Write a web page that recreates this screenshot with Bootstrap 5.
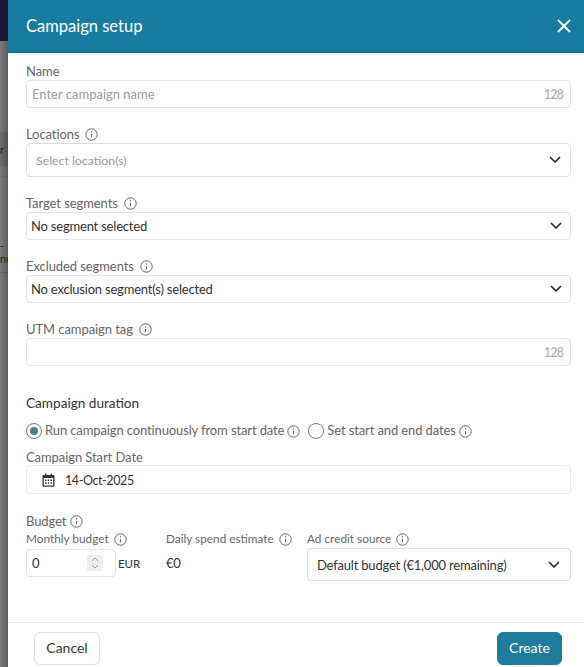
<!DOCTYPE html>
<html lang="en">
<head>
<meta charset="utf-8">
<title>Campaign setup</title>
<link rel="stylesheet" href="https://cdn.jsdelivr.net/npm/bootstrap@5.3.0/dist/css/bootstrap.min.css">
<style>
html,body{height:667px;overflow:hidden;background:#fff}
body{font-family:"Lato","Noto Sans",sans-serif;font-size:13px;color:#333}
.shell{height:667px}
.backdrop{width:8px;flex:none;background:linear-gradient(to right,#7c7c7c,#5c5c5c);overflow:hidden;color:#222;font-size:11px;line-height:13px;white-space:nowrap}
.bd-top{height:41px;background:#1e1338}
.bd-row1{height:34px;margin-top:91px;background:rgba(0,0,0,.1);padding-top:11px;border-bottom:1px solid rgba(0,0,0,.08)}
.bd-row2{height:97px;margin-top:10px;padding-top:62px;border-top:1px solid rgba(0,0,0,.08);border-bottom:1px solid rgba(0,0,0,.12)}
.sheet{flex:1;min-width:0;height:667px}
.sheet-head{height:53px;background:#187ba0;color:#fff;padding:0 13px 0 18px;border-bottom:1px solid #14708f}
.sheet-title{font-size:16.500px;line-height:1;margin:0;font-weight:400}
.x-btn{background:none;border:0;padding:0;width:14px;height:14px;line-height:0}
.sheet-body{flex:1;padding:0 13px 0 18px}
.lbl{font-size:13px;letter-spacing:-.08px;color:#666;line-height:16px;margin:0 0 1px}
.info{width:13px;height:13px;margin-left:6px;flex:none;color:#666}
.lbl-s .info{margin-left:5px}
.field{height:28px;border:1px solid #e4e4e4;border-radius:4px;padding:0 7px 0 4px;background:#fff}
.field.tall{height:34px;padding:0 9px 0 8px;border-color:#dcdcdc}
.ph{color:#9a9a9a;font-size:13px;margin-left:1px;padding-top:2px}
.ph-sel{font-size:12.300px}
.cnt{color:#aaa;font-size:12.500px;letter-spacing:-.9px;padding-top:2px}
.val{color:#333;font-size:13px;letter-spacing:-.2px;padding-top:2px}
.chev{width:12px;height:8px;flex:none}
.chev-in{margin-right:1px}
.f-name{margin-top:10px}
.f-gap{margin-top:18px}
.dur-h{margin-top:29px;font-size:13.600px;color:#333;line-height:16px}
.radios{margin-top:11px;height:18px;font-size:13px;letter-spacing:-.12px;color:#666}
.radios .info{margin-left:3px}
.rd{width:16px;height:16px;border-radius:50%;border:1.500px solid #5b8296;flex:none;margin-right:3px;display:flex;align-items:center;justify-content:center}
.rd i{width:8px;height:8px;border-radius:50%;background:#4f7c93;display:block}
.rd-2{margin-left:8px}
.f-start{margin-top:9px}
.f-start .lbl{margin-bottom:0}
.date-f{height:29px;padding:0 13px 0 15px;border-color:#ececec;gap:10px}
.date-txt{font-size:12.500px;letter-spacing:-.4px;padding-top:4px}
.budget-h{margin-top:19px;margin-bottom:0}
.budget-h .info{margin-left:4px}
.bcols{display:flex;margin-top:2px}
.col-a{width:140px}
.col-b{width:141px}
.col-c{flex:1}
.lbl-s{font-size:11.800px;color:#666;line-height:16px}
.numrow{margin-top:2px}
.numf{width:90px;height:28px;border:1px solid #e4e4e4;border-radius:4px;padding:0 12px 0 5px}
.spin{width:16px;height:16px;background:#eceef1;border-radius:1px;flex:none}
.eur{margin-left:2px;font-size:11.500px;letter-spacing:-.1px}
.est{height:28px;margin-top:2px}
.sel-c{height:33px;border:1px solid #dcdcdc;border-radius:4px;padding:0 10px 0 9px;margin-top:1px}
.sheet-foot{height:45px;border-top:1px solid #e9e9e9;padding:9px 22px 0 26px}
.b-cancel,.b-create{height:33px;padding:0 0 2px;font-size:14px;line-height:1;border-radius:6px}
.b-cancel{width:66px;background:#fff;border:1px solid #dedede;color:#333}
.b-create{width:65px;background:#1f7c9c;border:1px solid #1f7c9c;color:#fff}
</style>
</head>
<body>
<svg width="0" height="0" class="d-block position-absolute"><defs>
<symbol id="i-info" viewBox="0 0 13 13"><circle cx="6.500" cy="6.500" r="5.700" fill="none" stroke="currentColor"/><path d="M6.500 6v3.300" stroke="currentColor" fill="none"/><circle cx="6.500" cy="4" r=".7" fill="currentColor"/></symbol>
<symbol id="i-chev" viewBox="0 0 12 8"><path d="M1.500 1.500 6 6l4.500-4.500" fill="none" stroke="#2b2b2b" stroke-width="1.700" stroke-linecap="round" stroke-linejoin="round"/></symbol>
</defs></svg>
<div class="shell d-flex">
  <div class="backdrop">
    <div class="bd-top"></div>
    <div class="bd-row1">r 1</div>
    <div class="bd-row2">-<br>ne</div>
  </div>
  <div class="sheet d-flex flex-column">
    <div class="sheet-head d-flex align-items-center justify-content-between">
      <h5 class="sheet-title">Campaign setup</h5>
      <button class="x-btn" type="button" aria-label="Close"><svg width="14" height="14" viewBox="0 0 14 14"><path d="M1 1l12 12M13 1 1 13" stroke="#fff" stroke-width="1.800" fill="none"/></svg></button>
    </div>
    <div class="sheet-body d-flex flex-column">
      <div class="f-name">
        <div class="lbl">Name</div>
        <div class="field d-flex align-items-center justify-content-between"><span class="ph">Enter campaign name</span><span class="cnt">128</span></div>
      </div>
      <div class="f-gap">
        <div class="lbl d-flex align-items-center">Locations<svg class="info"><use href="#i-info"/></svg></div>
        <div class="field tall d-flex align-items-center justify-content-between"><span class="ph ph-sel">Select location(s)</span><svg class="chev"><use href="#i-chev"/></svg></div>
      </div>
      <div class="f-gap">
        <div class="lbl d-flex align-items-center">Target segments<svg class="info"><use href="#i-info"/></svg></div>
        <div class="field d-flex align-items-center justify-content-between"><span class="val">No segment selected</span><svg class="chev chev-in"><use href="#i-chev"/></svg></div>
      </div>
      <div class="f-gap">
        <div class="lbl d-flex align-items-center">Excluded segments<svg class="info"><use href="#i-info"/></svg></div>
        <div class="field d-flex align-items-center justify-content-between"><span class="val">No exclusion segment(s) selected</span><svg class="chev chev-in"><use href="#i-chev"/></svg></div>
      </div>
      <div class="f-gap">
        <div class="lbl d-flex align-items-center">UTM campaign tag<svg class="info"><use href="#i-info"/></svg></div>
        <div class="field d-flex align-items-center justify-content-end"><span class="cnt">128</span></div>
      </div>
      <div class="dur-h">Campaign duration</div>
      <div class="radios d-flex align-items-center">
        <span class="rd"><i></i></span>Run campaign continuously from start date<svg class="info"><use href="#i-info"/></svg>
        <span class="rd rd-2"></span>Set start and end dates<svg class="info"><use href="#i-info"/></svg>
      </div>
      <div class="f-start">
        <div class="lbl">Campaign Start Date</div>
        <div class="field date-f d-flex align-items-center"><svg width="13" height="14" viewBox="0 0 13 14"><path fill="#333" d="M1.500 2H3V.5h1.400V2h4.200V.5H10V2h1.500c.6 0 1 .4 1 1v9.700c0 .6-.4 1-1 1h-10c-.6 0-1-.4-1-1V3c0-.6.4-1 1-1z"/><rect x="1.800" y="5" width="9.400" height="7.500" fill="#fff"/><path fill="#333" d="M3 6.500h1.500V8H3zM5.700 6.500h1.500V8H5.700zM8.500 6.500H10V8H8.500zM3 9.300h1.500v1.500H3zM5.700 9.300h1.500v1.500H5.700zM8.500 9.300H10v1.500H8.500z"/></svg><span class="val date-txt">14-Oct-2025</span></div>
      </div>
      <div class="budget-h lbl d-flex align-items-center">Budget<svg class="info"><use href="#i-info"/></svg></div>
      <div class="bcols">
        <div class="col-a">
          <div class="lbl-s d-flex align-items-center">Monthly budget<svg class="info"><use href="#i-info"/></svg></div>
          <div class="numrow d-flex align-items-center">
            <div class="numf d-flex align-items-center justify-content-between"><span class="val">0</span><svg class="spin" viewBox="0 0 16 16"><path d="M5 6l3-3 3 3M5 10l3 3 3-3" fill="none" stroke="#9a9fa6" stroke-width="1"/></svg></div>
            <span class="val eur">EUR</span>
          </div>
        </div>
        <div class="col-b">
          <div class="lbl-s d-flex align-items-center">Daily spend estimate<svg class="info"><use href="#i-info"/></svg></div>
          <div class="val est d-flex align-items-center">€0</div>
        </div>
        <div class="col-c">
          <div class="lbl-s d-flex align-items-center">Ad credit source<svg class="info"><use href="#i-info"/></svg></div>
          <div class="sel-c d-flex align-items-center justify-content-between"><span class="val">Default budget (€1,000 remaining)</span><svg class="chev"><use href="#i-chev"/></svg></div>
        </div>
      </div>
    </div>
    <div class="sheet-foot d-flex justify-content-between">
      <button class="btn b-cancel" type="button">Cancel</button>
      <button class="btn b-create" type="button">Create</button>
    </div>
  </div>
</div>
<script src="https://cdn.jsdelivr.net/npm/bootstrap@5.3.0/dist/js/bootstrap.bundle.min.js"></script>
</body>
</html>
